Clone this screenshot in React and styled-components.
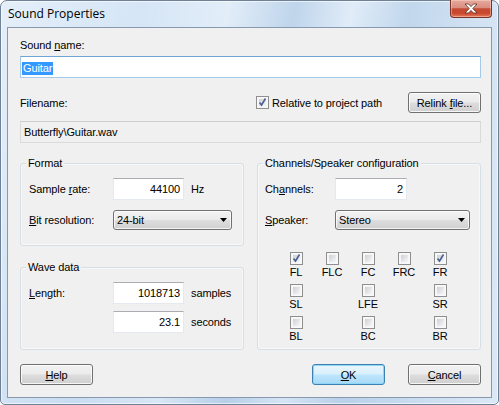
import styled, { createGlobalStyle } from "styled-components"

const GlobalStyle = createGlobalStyle`
    html, body {
        margin: 0;
        padding: 0;
        background: #ffffff;
    }
    body {
        font-family: "Liberation Sans", Arial, sans-serif;
        font-size: 11px;
        letter-spacing: -0.1px;
        color: #000;
    }
`

const Window = styled.div`
    box-sizing: border-box;
    width: 499px;
    height: 405px;
    display: flex;
    flex-direction: column;
    padding: 0 6px 6px;
    border: 1px solid #6f8196;
    border-radius: 7px 7px 5px 5px;
    background:
        linear-gradient(100deg, rgba(255,255,255,0.35) 0%, rgba(255,255,255,0) 25%, rgba(255,255,255,0.3) 40%, rgba(150,182,215,0.35) 52%, rgba(255,255,255,0.25) 62%, rgba(150,182,215,0.3) 72%, rgba(255,255,255,0.35) 100%),
        linear-gradient(180deg, #d6e6f6 0%, #c8dcf1 100%);
    box-shadow: inset 0 0 0 1px rgba(255,255,255,0.6);
`

const TitleBar = styled.div`
    height: 26px;
    display: flex;
    justify-content: space-between;
    align-items: flex-start;
`

const Title = styled.span`
    margin: 5px 0 0 1px;
    font-family: "Open Sans", "Liberation Sans", sans-serif;
    font-size: 12px;
    letter-spacing: 0;
    line-height: 16px;
`

const CloseButton = styled.div`
    box-sizing: border-box;
    width: 42px;
    height: 18px;
    margin-top: -1px;
    display: flex;
    align-items: center;
    justify-content: center;
    border: 1px solid #7a3327;
    border-top: none;
    border-radius: 0 0 4px 4px;
    background: linear-gradient(180deg, #e6aa9e 0%, #d98e80 45%, #c44a33 52%, #c9472d 78%, #e57a5c 100%);
    box-shadow: inset 0 0 0 1px rgba(255,220,210,0.45);
`

const Client = styled.div`
    flex: 1;
    display: flex;
    flex-direction: column;
    padding: 11px 10px 12px 12px;
    border: 1px solid #8799ae;
    background: #f0f0f0;
`

const Label = styled.span`
    line-height: 13px;
`

const Key = styled.span`
    text-decoration: underline;
`

const Field = styled.div`
    box-sizing: border-box;
    height: 22px;
    width: ${p => (p.$width ? `${p.$width}px` : "auto")};
    margin-top: ${p => p.$top || 0}px;
    padding: 0 ${p => (p.$align === "right" ? 3 : 2)}px 0 ${p => (p.$readOnly ? 3 : 1)}px;
    border: 1px solid ${p => (p.$focused ? "#a6cbe8" : p.$readOnly ? "#dadada" : "#e3e9ef")};
    border-top-color: ${p => (p.$focused ? "#6fa6d6" : p.$readOnly ? "#cfcfcf" : "#abadb3")};
    background: ${p => (p.$readOnly ? "#f0f0f0" : "#ffffff")};
    line-height: 20px;
    text-align: ${p => p.$align || "left"};
    white-space: nowrap;
`

const Selection = styled.span`
    display: inline-block;
    vertical-align: middle;
    padding: 0 1px;
    line-height: 13px;
    background: #3399ff;
    color: #ffffff;
`

const FileRow = styled.div`
    display: flex;
    align-items: center;
    height: 21px;
    margin-top: 14px;
`

const FileLabel = styled.span`
    width: 236px;
`

const CheckLabel = styled.label`
    display: flex;
    align-items: center;
    gap: 3px;
`

const Box = styled.span`
    position: relative;
    box-sizing: border-box;
    display: inline-block;
    width: 13px;
    height: 13px;
    padding: 2px;
    border: 1px solid #8f8f8f;
    background: linear-gradient(135deg, #cdd1d6 0%, #f6f6f7 100%) content-box, #f7f7f7;
    svg {
        position: absolute;
        left: 0;
        top: 0;
    }
`

const Button = styled.button`
    box-sizing: border-box;
    width: 73px;
    height: 21px;
    padding: 0;
    font: inherit;
    letter-spacing: inherit;
    color: #000;
    border: 1px solid ${p => (p.$default ? "#3c7fb1" : "#707070")};
    border-radius: 3px;
    background: ${p =>
        p.$default
            ? "linear-gradient(180deg, #eaf6fd 0%, #d9f0fc 48%, #bee6fd 52%, #a7d9f5 100%)"
            : "linear-gradient(180deg, #f2f2f2 0%, #ebebeb 48%, #dddddd 52%, #cfcfcf 100%)"};
    box-shadow: inset 0 0 0 1px ${p => (p.$default ? "#8fd6f8" : "rgba(255,255,255,0.8)")};
`

const RelinkButton = styled(Button)`
    margin-left: auto;
`

const Groups = styled.div`
    display: grid;
    grid-template-columns: 224px 224px;
    column-gap: 13px;
    margin-top: 20px;
`

const Column = styled.div`
    display: flex;
    flex-direction: column;
    gap: 21px;
`

const GroupBox = styled.div`
    position: relative;
    box-sizing: border-box;
    display: flex;
    flex-direction: column;
    gap: ${p => p.$gap}px;
    padding: ${p => p.$pad};
    border: 1px solid #d5dfe5;
    border-radius: 3px;
    box-shadow: inset 0 0 0 1px rgba(255,255,255,0.5);
`

const GroupTitle = styled.span`
    position: absolute;
    top: -7px;
    left: 5px;
    padding: 0 2px;
    line-height: 13px;
    background: #f0f0f0;
`

const FormRow = styled.div`
    display: flex;
    align-items: center;
`

const RowLabel = styled.span`
    width: ${p => p.$width}px;
    flex: none;
`

const Unit = styled.span`
    margin-left: 7px;
`

const Select = styled.div`
    box-sizing: border-box;
    width: ${p => p.$width}px;
    height: 20px;
    display: flex;
    align-items: center;
    justify-content: space-between;
    padding: 0 4px 0 3px;
    border: 1px solid #707070;
    border-radius: 3px;
    background: linear-gradient(180deg, #f2f2f2 0%, #ebebeb 48%, #dddddd 52%, #cfcfcf 100%);
    box-shadow: inset 0 0 0 1px rgba(255,255,255,0.75);
`

const SpeakerGrid = styled.div`
    display: grid;
    grid-template-columns: repeat(5, 36px);
    row-gap: 5px;
    margin: 12px 0 0 13px;
`

const SpeakerCell = styled.div`
    grid-column: ${p => p.$col};
    grid-row: ${p => p.$row};
    display: flex;
    flex-direction: column;
    align-items: center;
`

const SpeakerName = styled.span`
    line-height: 14px;
`

const ButtonRow = styled.div`
    display: flex;
    margin-top: 14px;
`

const OkButton = styled(Button)`
    margin-left: auto;
`

const CancelButton = styled(Button)`
    margin-left: 23px;
`

const speakers = [
    { name: "FL", col: 1, row: 1, checked: true },
    { name: "FLC", col: 2, row: 1 },
    { name: "FC", col: 3, row: 1 },
    { name: "FRC", col: 4, row: 1 },
    { name: "FR", col: 5, row: 1, checked: true },
    { name: "SL", col: 1, row: 2 },
    { name: "LFE", col: 3, row: 2 },
    { name: "SR", col: 5, row: 2 },
    { name: "BL", col: 1, row: 3 },
    { name: "BC", col: 3, row: 3 },
    { name: "BR", col: 5, row: 3 },
]

function CheckBox({ checked }) {
    return (
        <Box>
            {checked && (
                <svg width="11" height="11" viewBox="0 0 11 11">
                    <path d="M2.5 5.5 L4.5 8 L8.5 1.5" fill="none" stroke="#4b5f95" strokeWidth="1.6" />
                </svg>
            )}
        </Box>
    )
}

function DropArrow() {
    return (
        <svg width="7" height="4" viewBox="0 0 7 4">
            <polygon points="0,0 7,0 3.5,4" fill="#000" />
        </svg>
    )
}

export default function App() {
    return (
        <>
            <GlobalStyle />
            <Window>
                <TitleBar>
                    <Title>Sound Properties</Title>
                    <CloseButton>
                        <svg width="14" height="11" viewBox="0 0 14 11">
                            <path
                                d="M1 1 h3.6 l2.4 2.6 l2.4 -2.6 h3.6 l-4.2 4.5 l4.2 4.5 h-3.6 l-2.4 -2.6 l-2.4 2.6 h-3.6 l4.2 -4.5 z"
                                fill="#ffffff"
                                stroke="#5b2d26"
                                strokeWidth="0.8"
                                strokeLinejoin="round"
                            />
                        </svg>
                    </CloseButton>
                </TitleBar>
                <Client>
                    <Label>Sound <Key>n</Key>ame:</Label>
                    <Field $top={4} $focused>
                        <Selection>Guitar</Selection>
                    </Field>
                    <FileRow>
                        <FileLabel>Filename:</FileLabel>
                        <CheckLabel>
                            <CheckBox checked />
                            Relative to project path
                        </CheckLabel>
                        <RelinkButton>Relink <Key>f</Key>ile...</RelinkButton>
                    </FileRow>
                    <Field $top={8} $readOnly>Butterfly\Guitar.wav</Field>
                    <Groups>
                        <Column>
                            <GroupBox $gap={10} $pad="14px 8px 15px">
                                <GroupTitle>Format</GroupTitle>
                                <FormRow>
                                    <RowLabel $width={84}>Sample <Key>r</Key>ate:</RowLabel>
                                    <Field $width={71} $align="right">44100</Field>
                                    <Unit>Hz</Unit>
                                </FormRow>
                                <FormRow>
                                    <RowLabel $width={84}><Key>B</Key>it resolution:</RowLabel>
                                    <Select $width={119}>
                                        24-bit
                                        <DropArrow />
                                    </Select>
                                </FormRow>
                            </GroupBox>
                            <GroupBox $gap={7} $pad="14px 8px 16px">
                                <GroupTitle>Wave data</GroupTitle>
                                <FormRow>
                                    <RowLabel $width={84}><Key>L</Key>ength:</RowLabel>
                                    <Field $width={71} $align="right">1018713</Field>
                                    <Unit>samples</Unit>
                                </FormRow>
                                <FormRow>
                                    <RowLabel $width={84} />
                                    <Field $width={71} $align="right">23.1</Field>
                                    <Unit>seconds</Unit>
                                </FormRow>
                            </GroupBox>
                        </Column>
                        <GroupBox $gap={10} $pad="14px 7px 6px">
                            <GroupTitle>Channels/Speaker configuration</GroupTitle>
                            <FormRow>
                                <RowLabel $width={70}>Ch<Key>a</Key>nnels:</RowLabel>
                                <Field $width={72} $align="right">2</Field>
                            </FormRow>
                            <FormRow>
                                <RowLabel $width={70}><Key>S</Key>peaker:</RowLabel>
                                <Select $width={135}>
                                    Stereo
                                    <DropArrow />
                                </Select>
                            </FormRow>
                            <SpeakerGrid>
                                {speakers.map(s => (
                                    <SpeakerCell key={s.name} $col={s.col} $row={s.row}>
                                        <CheckBox checked={s.checked} />
                                        <SpeakerName>{s.name}</SpeakerName>
                                    </SpeakerCell>
                                ))}
                            </SpeakerGrid>
                        </GroupBox>
                    </Groups>
                    <ButtonRow>
                        <Button><Key>H</Key>elp</Button>
                        <OkButton $default><Key>O</Key>K</OkButton>
                        <CancelButton><Key>C</Key>ancel</CancelButton>
                    </ButtonRow>
                </Client>
            </Window>
        </>
    )
}
